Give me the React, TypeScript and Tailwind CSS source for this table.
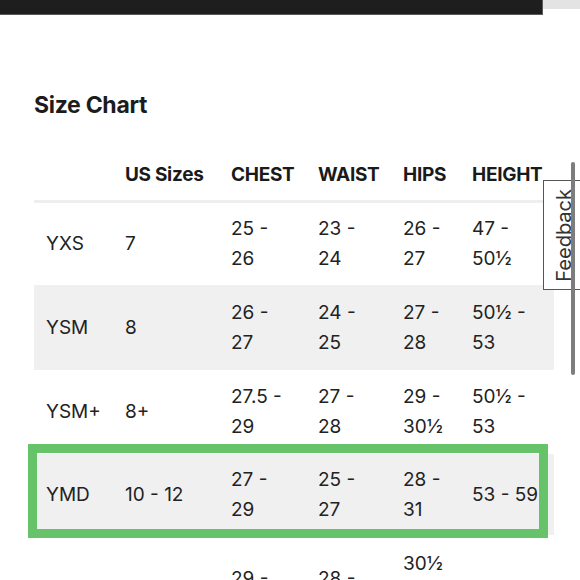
import React from 'react';

type Row = { size: string; us: string; chest: string[]; waist: string[]; hips: string[]; height: string[] };

const rows: Row[] = [
  { size: 'YXS', us: '7', chest: ['25 -', '26'], waist: ['23 -', '24'], hips: ['26 -', '27'], height: ['47 -', '50½'] },
  { size: 'YSM', us: '8', chest: ['26 -', '27'], waist: ['24 -', '25'], hips: ['27 -', '28'], height: ['50½ -', '53'] },
  { size: 'YSM+', us: '8+', chest: ['27.5 -', '29'], waist: ['27 -', '28'], hips: ['29 -', '30½'], height: ['50½ -', '53'] },
  { size: 'YMD', us: '10 - 12', chest: ['27 -', '29'], waist: ['25 -', '27'], hips: ['28 -', '31'], height: ['53 - 59'] },
  { size: 'YLG', us: '14 - 16', chest: ['29 -', '32'], waist: ['28 -', '30'], hips: ['30½', '-', '33'], height: ['59 - 63'] },
];

const heights = ['h-[82px]', 'h-[85px]', 'h-[84px]', 'h-[81px]', 'h-[118px]'];
const cols = 'grid grid-cols-[79px_106px_87px_85px_69px_94px]';

function Cell({ lines }: { lines: string[] }) {
  return (
    <div className="flex flex-col justify-center px-3">
      {lines.map((l, i) => (
        <span key={i} className="whitespace-nowrap">{l}</span>
      ))}
    </div>
  );
}

export default function App() {
  return (
    <div
      className="relative h-[580px] w-[580px] overflow-hidden bg-white text-[#222]"
      style={{ fontFamily: 'Inter, "Liberation Sans", sans-serif' }}
    >
      {/* top bar */}
      <div className="flex items-start">
        <div className="h-[15px] w-[543px] border-b border-r border-[#5a5a5a] bg-[#1e1e1e]" />
        <div className="h-[9px] flex-1 bg-[#e3e3e3]" />
      </div>

      <div className="pl-[34px]">
        <h2 className="mt-[76px] text-[23px] font-bold leading-[28px] tracking-[-0.3px] text-[#1c1c1c]">Size Chart</h2>

        <div className="mt-[32px] w-[520px]">
          {/* header */}
          <div className={`${cols} h-[52px] items-center border-b-[3px] border-[#eeeeee] text-[19px] font-bold tracking-[-0.3px] text-[#1a1a1a]`}>
            <div className="px-3" />
            <div className="px-3 whitespace-nowrap">US Sizes</div>
            <div className="px-3">CHEST</div>
            <div className="px-3">WAIST</div>
            <div className="px-3">HIPS</div>
            <div className="px-3">HEIGHT</div>
          </div>

          {rows.map((r, i) => (
            <div
              key={r.size}
              className={`${cols} ${heights[i]} text-[19px] leading-[30px] ${i % 2 === 1 ? 'bg-[#f0f0f0]' : 'bg-white'}`}
            >
              <Cell lines={[r.size]} />
              <Cell lines={[r.us]} />
              <Cell lines={r.chest} />
              <Cell lines={r.waist} />
              <Cell lines={r.hips} />
              <Cell lines={r.height} />
            </div>
          ))}
        </div>
      </div>

      {/* highlight around YMD row */}
      <div className="pointer-events-none absolute left-[28px] top-[444px] h-[94px] w-[520px] border-[9px] border-[#67c36a]" />

      {/* feedback tab */}
      <div className="absolute left-[543px] top-[180px] flex h-[110px] w-[42px] items-center justify-center border border-[#555] bg-white">
        <span className="rotate-180 text-[20px] leading-[22px] text-[#333] [writing-mode:vertical-rl]">Feedback</span>
      </div>

      {/* scrollbar */}
      <div className="absolute left-[571px] top-[162px] h-[213px] w-[4px] rounded-full bg-[#7d7d7d]" />
    </div>
  );
}
